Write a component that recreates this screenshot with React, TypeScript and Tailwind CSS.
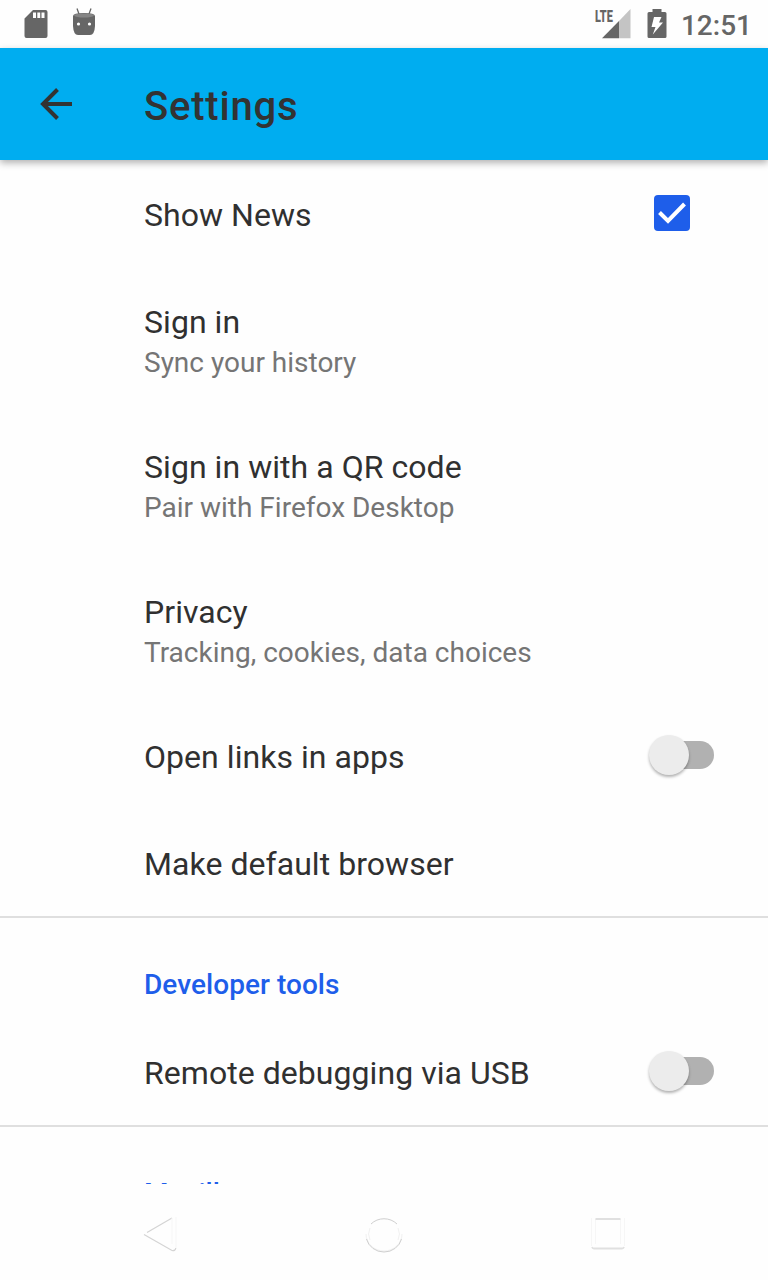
import type { ReactNode } from "react";

function StatusBar() {
  return (
    <header className="flex h-12 shrink-0 items-start text-[#666666]">
      <svg className="ml-6 mt-[9px] h-[30px] w-6" viewBox="0 0 24 30">
        <path fill="currentColor" fillRule="evenodd" d="M9 1H21.500Q23.500 1 23.500 3V27Q23.500 29 21.500 29H2.500Q.5 29 .5 27V9.500ZM9 3.500V9H12V3.500ZM13.300 3.500V9H16.200V3.500ZM17.500 3.500V9H20.500V3.500Z" />
      </svg>
      <svg className="ml-6 mt-[7px] h-[30px] w-6" viewBox="0 0 24 30">
        <path d="M5 1.500 7 7M19 1.500 17 7" stroke="currentColor" strokeWidth="1.300" />
        <path fill="currentColor" d="M1 9Q1 6 12 6T23 9V19Q22.500 28 18 28H6Q1.500 28 1 19Z" />
        <path fill="#858585" d="M2 8.500Q2 6.500 12 6.500T22 8.500Q20 10.500 12 10.500T2 8.500Z" />
        <circle cx="6.500" cy="17" r="1.600" fill="#fff" />
        <circle cx="17.500" cy="17" r="1.600" fill="#fff" />
      </svg>
      <div className="relative ml-auto mr-4 mt-[9px] h-[30px] w-9">
        <svg className="h-[30px] w-9" viewBox="0 0 36 30">
          <path fill="#c4c4c4" d="M35.500 0V29.300H24V12Z" />
          <path fill="currentColor" d="M24 12V29.300H7Z" />
        </svg>
        <span className="absolute left-0 top-0 origin-left scale-x-[0.680] text-[16px] font-black leading-[16px]">LTE</span>
      </div>
      <svg className="mt-[9px] h-[30px] w-5" viewBox="0 0 20 30">
        <path fill="currentColor" d="M5.500 0H14.500V3H18Q19.500 3 19.500 4.500V27.500Q19.500 29 18 29H2Q.5 29 .5 27.500V4.500Q.5 3 2 3H5.500Z" />
        <path fill="#fff" d="M7 8H14.500L12 13.500H16L5.800 25.500 8.500 18H4.500Z" />
      </svg>
      <span className="ml-[14px] mr-4 mt-[10px] text-[28px] font-medium leading-8">12:51</span>
    </header>
  );
}

function Toggle() {
  return (
    <span className="mb-[2px] mr-[54px] flex h-7 w-[60px] items-center rounded-full bg-[#b1b1b1]">
      <span className="-ml-[5px] size-10 shrink-0 rounded-full bg-[#ececec] shadow-[0_2px_3px_rgba(0,0,0,0.300)]" />
    </span>
  );
}

function Check() {
  return (
    <svg className="mb-[2px] mr-[78px] size-9" viewBox="0 0 36 36">
      <rect width="36" height="36" rx="4" fill="#1e5eea" />
      <path d="M5.500 17.500 14 26 30.500 9" fill="none" stroke="#fff" strokeWidth="4" />
    </svg>
  );
}

function Row({ title, summary, children }: { title: string; summary?: string; children?: ReactNode }) {
  return (
    <div className="flex shrink-0 items-center justify-between py-8 pl-36">
      <div>
        <div className="h-[43px] pt-px text-[32px] leading-[44px] tracking-[0.050px] text-[#303030]">{title}</div>
        {summary && <div className="h-[38px] pt-[2px] text-[28px] leading-[38px] text-[#757575]">{summary}</div>}
      </div>
      {children}
    </div>
  );
}

function Divider() {
  return <div className="h-[2px] shrink-0 bg-[#dfdfdf]" />;
}

function Category({ title }: { title: string }) {
  return <h2 className="h-[100px] shrink-0 pl-36 pt-12 text-[28px] font-medium leading-[38px] tracking-[0.050px] text-[#1e5eea]">{title}</h2>;
}

function NavBar() {
  return (
    <nav className="flex h-24 shrink-0 items-center justify-between px-[142px] pt-1">
      <svg className="h-10 w-9" viewBox="0 0 36 40" fill="none" stroke="#d4d4d4">
        <path d="M5 18.500 30 4M2 20.500 30 36.500Q33.500 37 33.800 34" strokeWidth="1.200" />
        <path d="M30 4V30M34 3V34" stroke="#f6f6f6" />
      </svg>
      <svg className="h-10 w-10" viewBox="0 0 40 40" fill="none">
        <path d="M2 20A18 17 0 0 0 38 20M6 14A14.500 14 0 0 0 6 26M34 14A14.500 14 0 0 1 34 26" stroke="#f1f1f1" />
        <path d="M7 10A18 17 0 0 1 33 10M2.500 25A18 17 0 0 0 37.500 25" stroke="#cfcfcf" />
      </svg>
      <svg className="h-10 w-9" viewBox="0 0 36 40" fill="none">
        <path d="M1.500 4V32M34.500 4V32M5.500 5V30M30.500 5V30" stroke="#f6f6f6" />
        <path d="M5.500 5H30.500M2 33Q2.500 34.500 4 34.500H32Q33.500 34.500 34 33" stroke="#e0e0e0" strokeWidth="1.800" />
      </svg>
    </nav>
  );
}

export default function App() {
  return (
    <div className="flex h-[1280px] w-[768px] flex-col overflow-hidden bg-[#fefefe] font-[Roboto,sans-serif]">
      <StatusBar />
      <div className="relative z-10 flex h-28 shrink-0 items-center bg-[#00adf0] text-[#333333] shadow-[0_3px_7px_rgba(0,0,0,0.300)]">
        <svg className="ml-10 h-8 w-8" viewBox="0 0 32 32" fill="none" stroke="currentColor" strokeWidth="4">
          <path d="M32 16H3M17.500 1.500 3 16 17.500 30.500" />
        </svg>
        <h1 className="ml-[72px] mt-1.5 text-[40px] font-medium leading-[48px] tracking-[0.800px]">Settings</h1>
      </div>
      <main className="flex min-h-0 flex-1 flex-col overflow-hidden">
        <Row title="Show News"><Check /></Row>
        <Row title="Sign in" summary="Sync your history" />
        <Row title="Sign in with a QR code" summary="Pair with Firefox Desktop" />
        <Row title="Privacy" summary="Tracking, cookies, data choices" />
        <Row title="Open links in apps"><Toggle /></Row>
        <Row title="Make default browser" />
        <Divider />
        <Category title="Developer tools" />
        <Row title="Remote debugging via USB"><Toggle /></Row>
        <Divider />
        <Category title="Mozilla" />
      </main>
      <NavBar />
    </div>
  );
}
